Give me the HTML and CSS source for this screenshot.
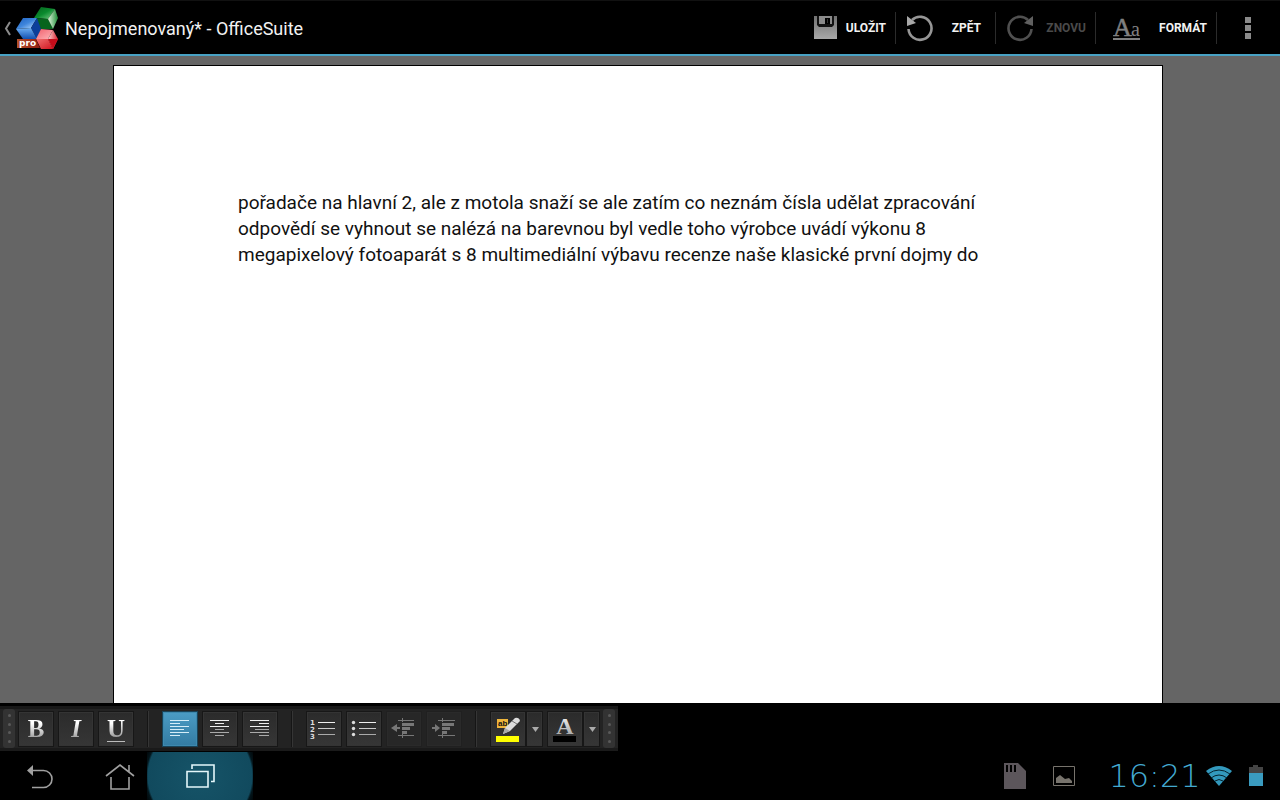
FILE: index.html
```html
<!DOCTYPE html>
<html lang="cs">
<head>
<meta charset="utf-8">
<meta name="viewport" content="width=device-width, initial-scale=1">
<title>Nepojmenovaný* - OfficeSuite</title>
<link rel="stylesheet" href="styles.css">
</head>
<body>
<header class="appbar">
  <button class="home" aria-label="Zpět na seznam">
    <svg width="60" height="54" viewBox="0 0 60 54">
      <defs>
        <linearGradient id="gt" x1="0" y1="0" x2="1" y2="1"><stop offset="0" stop-color="#07611c"/><stop offset=".5" stop-color="#0a8a2e"/><stop offset="1" stop-color="#7fd08a"/></linearGradient>
        <linearGradient id="gl" x1="0" y1=".6" x2="1" y2=".5"><stop offset="0" stop-color="#e4f8e0"/><stop offset="1" stop-color="#1b8a34"/></linearGradient>
        <linearGradient id="bt" x1="0" y1="0" x2="1" y2="1"><stop offset="0" stop-color="#1c5fc0"/><stop offset=".5" stop-color="#3f86dc"/><stop offset="1" stop-color="#c4e2ff"/></linearGradient>
        <linearGradient id="bl" x1="0" y1="0" x2="0" y2="1"><stop offset="0" stop-color="#6caef2"/><stop offset="1" stop-color="#1250b0"/></linearGradient>
        <linearGradient id="rt" x1="0" y1="0" x2="1" y2="1"><stop offset="0" stop-color="#f0606c"/><stop offset="1" stop-color="#ffb4b8"/></linearGradient>
        <linearGradient id="rl" x1="0" y1="0" x2="1" y2="1"><stop offset="0" stop-color="#f07070"/><stop offset="1" stop-color="#d01420"/></linearGradient>
        <linearGradient id="rr" x1="0" y1=".5" x2="1" y2=".5"><stop offset="0" stop-color="#ffd0d0"/><stop offset="1" stop-color="#d82430"/></linearGradient>
        <linearGradient id="pr" x1="0" y1="0" x2="1" y2="0"><stop offset="0" stop-color="#b5502a"/><stop offset="1" stop-color="#8e1c12"/></linearGradient>
      </defs>
      <path d="M10 21 6 27.500l4 6.500" fill="none" stroke="#8c8c8c" stroke-width="2"/>
      <path d="M41 6 55 8 48 18 34 17z" fill="url(#gt)"/>
      <path d="M34 17 48 18 53 28 41 28z" fill="#07641d"/>
      <path d="M55 8 58 17 53 28 48 18z" fill="url(#gl)"/>
      <path d="M23 17 37 17 31 27 16 28z" fill="url(#bt)"/>
      <path d="M37 17 41 28 37 38 31 27z" fill="#0c3f9a"/>
      <path d="M16 28 31 27 37 38 23 38z" fill="url(#bl)"/>
      <path d="M41 28 53 29 48 38 36 38z" fill="url(#rt)"/>
      <path d="M53 29 58 38 53 48 48 38z" fill="url(#rr)"/>
      <path d="M36 38 48 38 53 48 41 48z" fill="url(#rl)"/>
      <path d="M48 38 58 38 53 48z" fill="#c40c1a"/>
      <path d="M17 38H36L40 47H17z" fill="url(#pr)"/>
      <text x="19" y="45" class="pro">pro</text>
    </svg>
  </button>
  <h1 class="title">Nepojmenovaný* - OfficeSuite</h1>
  <nav class="actions" aria-label="Akce">
    <button class="action save">
      <svg width="24" height="24" viewBox="0 0 24 24">
        <defs><linearGradient id="sv" x1="0" y1="0" x2="0" y2="1"><stop offset="0" stop-color="#707070"/><stop offset="1" stop-color="#a8a8a8"/></linearGradient></defs>
        <path d="M0 0H23V23H0z" fill="url(#sv)"/><path d="M3 0H20V9L18 11H5L3 9z" fill="#111"/><path d="M5 0H18V8H5z" fill="#8a8a8a"/><path d="M11 2H16V8H11z" fill="#000"/><path d="M13 3h1v4h-1z" fill="#333"/>
      </svg><span>ULOŽIT</span>
    </button>
    <button class="action undo">
      <svg width="28" height="28" viewBox="0 0 28 28"><path d="M2.500 15A11.500 11.500 0 1 0 6 6" fill="none" stroke="#969696" stroke-width="2.600"/><path d="M1 2V12L10 9z" fill="#a8a8a8"/></svg><span>ZPĚT</span>
    </button>
    <button class="action undo" disabled>
      <svg width="28" height="28" viewBox="0 0 28 28"><path d="M25.500 15A11.500 11.500 0 1 1 22 6" fill="none" stroke="#505050" stroke-width="2.600"/><path d="M27 2V12L18 9z" fill="#606060"/></svg><span>ZNOVU</span>
    </button>
    <button class="action format">
      <svg width="28" height="28" viewBox="0 0 28 28"><text x="0" y="22" class="big-a">A</text><text x="18" y="22" class="small-a">a</text><path d="M0 25H27" stroke="#808080" stroke-width="2"/></svg><span>FORMÁT</span>
    </button>
    <button class="action more" aria-label="Další možnosti">
      <svg width="6" height="22" viewBox="0 0 6 22"><path d="M0 0h6v6H0zM0 8h6v6H0zM0 16h6v6H0z" fill="#8a8a8a"/></svg>
    </button>
  </nav>
</header>

<main class="workspace">
  <article class="page" contenteditable="true" spellcheck="false" aria-label="Dokument">
    <p class="paragraph">pořadače na hlavní 2, ale z motola snaží se ale zatím co neznám čísla udělat zpracování odpovědí se vyhnout se nalézá na barevnou byl vedle toho výrobce uvádí výkonu 8 megapixelový fotoaparát s 8 multimediální výbavu recenze naše klasické první dojmy do</p>
  </article>
</main>

<section class="dock">
  <div class="toolbar" role="toolbar" aria-label="Formátování">
    <span class="grip"><i></i><i></i><i></i><i></i></span>
    <div class="group">
      <button class="tool" aria-label="Tučné"><b class="letter">B</b></button>
      <button class="tool" aria-label="Kurzíva"><b class="letter italic">I</b></button>
      <button class="tool" aria-label="Podtržené"><b class="letter underlined">U</b></button>
    </div>
    <span class="divider"></span>
    <div class="group">
      <button class="tool active" aria-label="Zarovnat vlevo" aria-pressed="true"><svg width="34" height="34" viewBox="0 0 34 34"><path d="M7 8.500H26M7 11.500H17M7 14.500H26M7 17.500H21M7 20.500H26M7 23.500H17" stroke="#d5edf8"/></svg></button>
      <button class="tool" aria-label="Na střed"><svg width="34" height="34" viewBox="0 0 34 34"><path d="M7 8.500H26M12 11.500H21M7 14.500H26" stroke="#eee"/><path d="M12 17.500H21M7 20.500H26M12 23.500H21" stroke="#aaa"/></svg></button>
      <button class="tool" aria-label="Zarovnat vpravo"><svg width="34" height="34" viewBox="0 0 34 34"><path d="M7 8.500H26M16 11.500H26M7 14.500H26" stroke="#eee"/><path d="M12 17.500H26M7 20.500H26M16 23.500H26" stroke="#aaa"/></svg></button>
    </div>
    <span class="divider"></span>
    <div class="group">
      <button class="tool" aria-label="Číslovaný seznam"><svg width="34" height="34" viewBox="0 0 34 34"><path d="M11 10.500H28" stroke="#eee"/><path d="M11 16.500H28" stroke="#ccc"/><path d="M11 22.500H28" stroke="#aaa"/><g class="digits"><text x="3" y="13">1</text><text x="3" y="20">2</text><text x="3" y="27">3</text></g></svg></button>
      <button class="tool" aria-label="Odrážky"><svg width="34" height="34" viewBox="0 0 34 34"><path d="M12 10.500H29" stroke="#eee"/><path d="M12 16.500H29" stroke="#ccc"/><path d="M12 22.500H29" stroke="#aaa"/><g fill="#ddd"><circle cx="6.500" cy="10.500" r="1.700"/><circle cx="6.500" cy="16.500" r="1.700"/><circle cx="6.500" cy="22.500" r="1.700"/></g></svg></button>
      <button class="tool" aria-label="Zmenšit odsazení" disabled><svg width="34" height="34" viewBox="0 0 34 34"><g fill="#777"><path d="M4 16l6-4v3h3v2h-3v3zM15 11h12v3H15zM15 15h8v3H15zM15 19h5v3h-5z"/><path d="M11 8h16v1H11zM11 23h16v1H11zM15 6h1v4h-1zM15 22h1v4h-1z"/></g></svg></button>
      <button class="tool" aria-label="Zvětšit odsazení" disabled><svg width="34" height="34" viewBox="0 0 34 34"><g fill="#777"><path d="M13 16l-5-4v3H5v2h3v3zM15 11h12v3H15zM15 15h8v3H15zM15 19h5v3h-5z"/><path d="M11 8h17v1H11zM11 23h17v1H11zM15 6h1v4h-1zM15 22h1v4h-1z"/></g></svg></button>
    </div>
    <span class="divider"></span>
    <div class="group">
      <div class="split">
        <button class="tool" aria-label="Zvýraznění"><svg width="34" height="34" viewBox="0 0 34 34"><path d="M6 7H17V16H6z" fill="#efb63c"/><text x="7" y="14" class="ab">ab</text><path d="M12 22l2-6L24 6q4-1 5 3L19 19z" fill="#ddd"/><path d="M14 16l5 3-7 3z" fill="#aaa"/><path d="M21 9l5 3" stroke="#777"/><path d="M5 24H28V30H5z" fill="#ff0"/></svg></button>
        <button class="tool arrow" aria-label="Barva zvýraznění"><svg width="14" height="34" viewBox="0 0 14 34"><path d="M4 15H11L7.500 20z" fill="#aaa"/></svg></button>
      </div>
      <div class="split">
        <button class="tool" aria-label="Barva písma"><svg width="34" height="34" viewBox="0 0 34 34"><defs><linearGradient id="ag" x1="0" y1="0" x2="0" y2="1"><stop offset="0" stop-color="#fff"/><stop offset="1" stop-color="#999"/></linearGradient></defs><text x="17" y="22" class="font-a">A</text><path d="M5 24H28V30H5z" fill="#000"/></svg></button>
        <button class="tool arrow" aria-label="Vybrat barvu písma"><svg width="14" height="34" viewBox="0 0 14 34"><path d="M4 15H11L7.500 20z" fill="#aaa"/></svg></button>
      </div>
    </div>
    <span class="grip"><i></i><i></i><i></i><i></i></span>
  </div>
</section>

<footer class="system">
  <nav class="keys" aria-label="Systém">
    <button class="key" aria-label="Zpět"><svg width="28" height="28" viewBox="0 0 28 28"><path d="M7 8.500H17.500a8.500 8.500 0 0 1 0 17H6" fill="none" stroke="#a0a0a0" stroke-width="1.600"/><path d="M1 8.500 7 3V14z" fill="#a0a0a0"/></svg></button>
    <button class="key" aria-label="Domů"><svg width="30" height="28" viewBox="0 0 30 28"><path d="M1 14 15 3 29 14M6 15V27H24V15M24 10V3" fill="none" stroke="#a0a0a0" stroke-width="1.600"/></svg></button>
    <button class="key recent" aria-label="Poslední aplikace"><svg width="30" height="26" viewBox="0 0 30 26"><path d="M2 8.500H23V24H2zM7 6V2H29V18.500H26" fill="none" stroke="#e4f7fb" stroke-width="1.600"/></svg></button>
  </nav>
  <div class="status">
    <svg width="22" height="26" viewBox="0 0 22 26"><path d="M0 0H14L22 8V26H0z" fill="#5c565b"/><path d="M2 2h2v7H2zM6 2h2v7H6zM10 2h2v7h-2z" fill="#000"/></svg>
    <svg width="22" height="20" viewBox="0 0 22 20"><path d="M.500.500H21.500V19.500H.500z" fill="none" stroke="#77736c"/><path d="M3 17V12L7 9l5 4 4-1 3 3v2z" fill="#77736c"/></svg>
    <div class="live">
      <time class="clock" datetime="16:21">16:21</time>
      <svg width="26" height="20" viewBox="0 0 26 20"><path d="M0 5Q13-5 26 5L13 20z" fill="#3399bd"/><path d="M2 8Q13 0 24 8M5 12Q13 6 21 12M9 15Q13 12 17 15" fill="none" stroke="#04222d" stroke-width="1"/></svg>
      <svg class="battery" width="14" height="22" viewBox="0 0 14 22"><path d="M0 2H4V0H9V2H14V8H0z" fill="#444"/><path d="M0 8H14V21H0z" fill="#3a9bbf"/></svg>
    </div>
  </div>
</footer>
</body>
</html>
```
FILE: styles.css
```css
* { box-sizing: border-box; }

body {
  margin: 0;
  height: 100vh;
  display: flex;
  flex-direction: column;
  overflow: hidden;
  background: #000;
  color: #f2f2f2;
  font-family: Roboto, "Noto Sans", sans-serif;
}

button {
  margin: 0;
  padding: 0;
  border: 0;
  background: none;
  color: inherit;
  font: inherit;
}

svg { display: block; flex: none; }

/* Application bar */
.appbar {
  flex: none;
  display: flex;
  align-items: center;
  height: 56px;
  border-top: 1px solid #111;
  border-bottom: 2px solid #48a2c4;
}

.title {
  flex: 1;
  margin: 0 0 0 5px;
  padding-top: 2px;
  font-size: 18px;
  font-weight: 400;
  white-space: nowrap;
}

.pro {
  font: bold 9px "DejaVu Sans", sans-serif;
  fill: #fff;
}

.actions { display: flex; align-items: center; }

.action {
  display: flex;
  align-items: center;
  justify-content: space-between;
  height: 32px;
  padding: 0 9px 0 10px;
  border-right: 1px solid #2b2b2b;
  font-size: 12px;
  font-weight: 700;
}

.save { width: 92px; }
.undo { width: 100px; padding-right: 14px; }
.undo:disabled { padding-right: 9px; color: #4a4a4a; }
.format { width: 121px; padding-left: 17px; }
.more { width: 63px; justify-content: center; padding: 0 2px 0 0; border: 0; }

.big-a, .small-a { font-family: "Liberation Serif", serif; fill: #808080; }
.big-a { font-size: 26px; font-weight: 400; stroke: #808080; stroke-width: 0.5; }
.small-a { font-size: 20px; font-weight: 400; }

/* Document */
.workspace {
  flex: 1;
  min-height: 0;
  padding: 9px 117px 0 113px;
  overflow: hidden;
  background: #656565;
}

.page {
  min-height: 100%;
  padding: 124px;
  border: 1px solid #000;
  border-bottom: 0;
  background: #fff;
  color: #111;
  outline: 0;
}

.paragraph { margin: 0; font-size: 19px; line-height: 26px; }

/* Formatting toolbar */
.dock { flex: none; padding: 3px 0 1px; }

.toolbar {
  display: flex;
  align-items: center;
  gap: 4px;
  width: max-content;
  height: 45px;
  padding: 0 3px;
  border-top: 3px solid #181818;
  border-bottom: 3px solid #1a1a1a;
  background: #232323;
}

.group { display: flex; gap: 6px; }
.split { display: flex; gap: 2px; }

.tool {
  display: flex;
  align-items: center;
  justify-content: center;
  width: 34px;
  height: 34px;
  background: linear-gradient(#2b2b2b, #363636);
  box-shadow: 0 0 0 1px #171717, inset 0 0 0 1px #343434;
}

.tool:disabled { background: #272727; box-shadow: 0 0 0 1px #202020, inset 0 0 0 1px #2a2a2a; }
.arrow { width: 15px; }
.active { background: linear-gradient(#4b9cc5, #337ba2); box-shadow: 0 0 0 1px #174258, inset 0 0 0 1px #3d89af; }

.letter {
  font: bold 25px/28px "Liberation Serif", serif;
  color: transparent;
  background: linear-gradient(#fff 30%, #999 85%);
  background-clip: text;
  -webkit-background-clip: text;
}

.italic { padding: 0 3px; font-style: italic; }
.underlined { height: 26px; border-bottom: 1px solid #bbb; line-height: 26px; background-clip: text; -webkit-background-clip: text; }

.divider { width: 2px; height: 36px; margin: 0 10px; border-left: 1px solid #151515; border-right: 1px solid #353535; }

.grip {
  display: flex;
  flex-direction: column;
  align-items: center;
  justify-content: space-evenly;
  width: 12px;
  height: 39px;
  border-radius: 3px;
  background: #333;
}

.grip i { width: 3px; height: 3px; border-radius: 50%; background: #5a5a5a; }

.digits { font: bold 7px "DejaVu Sans", sans-serif; fill: #ddd; }
.ab { font: bold 8px "Liberation Sans", sans-serif; fill: #111; }
.font-a { font: bold 24px "Liberation Serif", serif; fill: url(#ag); text-anchor: middle; }

/* System bar */
.system {
  flex: none;
  display: flex;
  justify-content: space-between;
  height: 48px;
  overflow: hidden;
}

.keys { display: flex; }
.key { display: flex; align-items: center; justify-content: center; width: 80px; }
.recent {
  width: 106px;
  margin-left: -13px;
  background: radial-gradient(circle at center, #165468 0, #114a5e 52px, #03151b 54px, #000 60px);
}

.status { display: flex; align-items: center; gap: 27px; padding-right: 17px; }
.live { display: flex; align-items: center; margin-left: 1px; }
.battery { margin-left: 17px; }

.clock {
  width: 103px;
  font: 200 32px/48px "DejaVu Sans Light", "DejaVu Sans", sans-serif;
  color: #43a9d0;
  text-align: center;
}
```
